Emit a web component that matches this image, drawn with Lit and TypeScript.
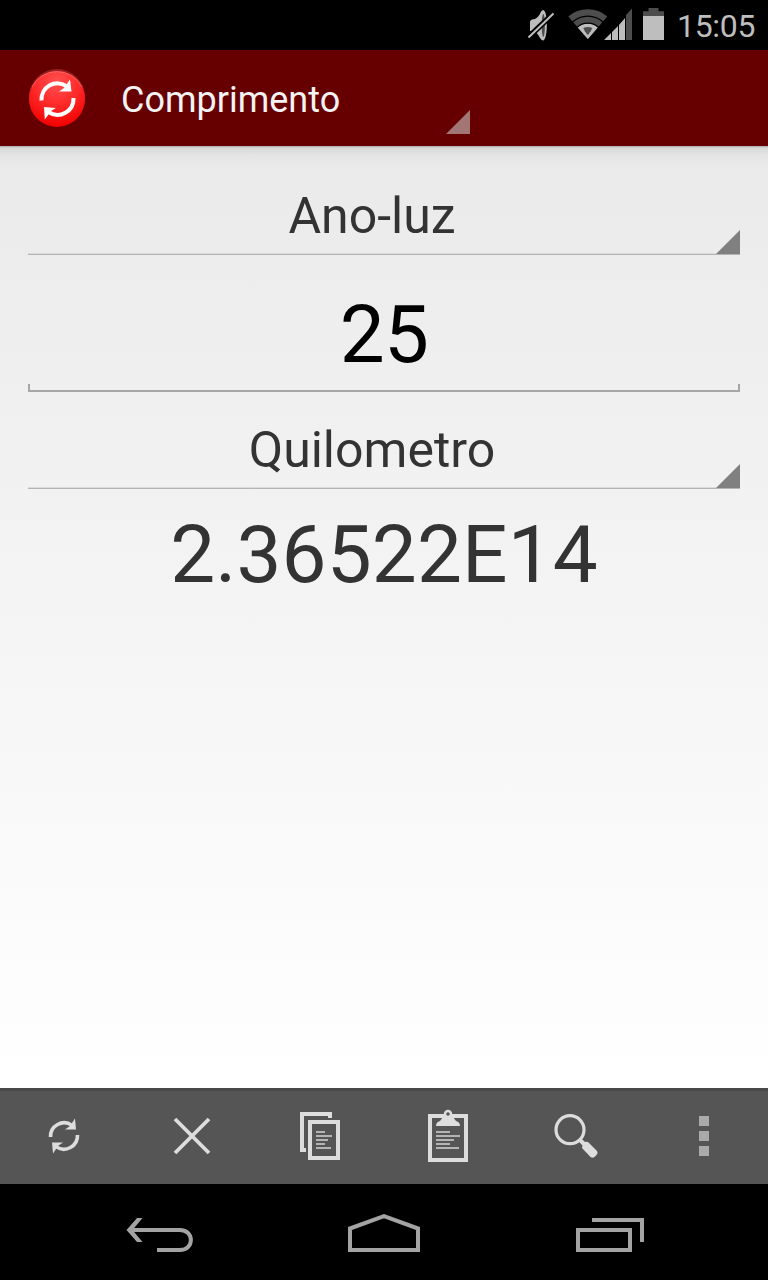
import { LitElement, html, css, svg } from "lit";
import { customElement, property } from "lit/decorators.js";

@customElement("status-bar")
class StatusBar extends LitElement {
  static styles = css`
    :host { display: flex; height: 50px; background: #000; justify-content: flex-end; box-sizing: border-box; padding-right: 13px; }
    svg { display: block; width: 144px; height: 50px; margin-right: 9px; flex: none; }
    .clock { font: 32px/52px Roboto, sans-serif; color: #bebebe; width: 78px; white-space: nowrap; letter-spacing: -0.3px; }
  `;
  render() {
    return html`
      <svg viewBox="524 0 144 50">
        <path fill="#bebebe" d="M530 22Q530 20 532 19.500L535 19Q539 17 541 11.500Q542 10 543.500 10C548 12 548 38 543.500 40.500Q541.500 40.500 540 38Q537.500 33 535 32L530 31Z"/>
        <ellipse cx="543.300" cy="25.500" rx="1.600" ry="11.500" fill="#000" opacity=".6"/>
        <path stroke="#000" stroke-width="5.500" d="M527 38.500L555 12"/>
        <path stroke="#bebebe" stroke-width="2" d="M528.500 37.500L553.500 13.500"/>
        <path fill="#4d4d4d" d="M587.800 39L568.300 16.500A29.700 29.700 0 0 1 607.300 16.500Z"/>
        <path fill="#bebebe" d="M587.800 39L577.500 27.300A15.500 15.500 0 0 1 598.100 27.300Z"/>
        <g fill="none" stroke="#000" stroke-width="1.300">
          <path d="M572 22.500A22.700 22.700 0 0 1 603.600 22.500"/>
          <path d="M577 27.500A15.700 15.700 0 0 1 598.600 27.500"/>
        </g>
        <path fill="#4d4d4d" d="M583.300 28Q588 26 592.300 28L590.800 31.300Q590.500 32 589.500 32.500L588.800 34.500H586.800L586 32.500Q585 32 584.800 31.300Z"/>
        <path fill="#bebebe" d="M604 40L611 33V40ZM612 32L618 26V40H612ZM619 25L625 18V40H619Z"/>
        <path fill="#4d4d4d" d="M626 15L632 8.500V40H626Z"/>
        <path fill="#4d4d4d" d="M643 16V11.300H648.500V8H658.500V11.300H664V16Z"/>
        <path fill="#bebebe" d="M643 16H664V40H643Z"/>
      </svg>
      <span class="clock">15:05</span>`;
  }
}

@customElement("app-header")
class AppHeader extends LitElement {
  @property() heading = "";
  static styles = css`
    :host { display: flex; height: 96px; background: #600; }
    .logo { display: block; width: 64px; height: 96px; margin-left: 25px; flex: none; }
    .picker { display: flex; align-items: flex-end; justify-content: space-between; width: 349px; height: 84px; margin-left: 32px; }
    .name { font: 36px/100px Roboto, sans-serif; color: #f3f3f3; height: 84px; }
    .corner { width: 24px; height: 24px; background: #a37676; clip-path: polygon(100% 0, 100% 100%, 0 100%); }
  `;
  render() {
    return html`
      <svg class="logo" viewBox="25 50 64 96">
        <defs>
          <radialGradient id="ball" cx=".5" cy=".2" r=".8">
            <stop offset="0" stop-color="#ff5050"/>
            <stop offset=".5" stop-color="#ff2a2a"/>
            <stop offset="1" stop-color="#f00000"/>
          </radialGradient>
        </defs>
        <circle cx="57" cy="97" r="28" fill="#982020"/>
        <circle cx="57" cy="99" r="28" fill="url(#ball)"/>
        <path d="M32 87A28 28 0 0 1 82 87" fill="none" stroke="#ff8888" stroke-opacity=".5"/>
        <g fill="none" stroke="#fff" stroke-width="4">
          <path d="M41.500 100.500A16 16 0 0 1 67 86.500"/>
          <path d="M73.500 98A16 16 0 0 1 48.500 112"/>
        </g>
        <path fill="#fff" d="M70 79.500L71.500 91.500L59 91.500L64 88ZM44.800 119.500L44 107L56 108L51 111Z"/>
      </svg>
      <div class="picker"><span class="name">${this.heading}</span><span class="corner"></span></div>`;
  }
}

@customElement("unit-spinner")
class UnitSpinner extends LitElement {
  @property() label = "";
  static styles = css`
    :host { display: grid; grid-template-columns: 24px 1fr 24px; align-items: end; height: 85px; box-sizing: border-box; border-bottom: 1px solid #b4b4b4; box-shadow: inset 0 -1px #dcdcdc; }
    .label { grid-column: 1 / 3; grid-row: 1; text-align: center; font: 50px/92px Roboto, sans-serif; color: #333; height: 84px; }
    .corner { grid-column: 3; grid-row: 1; width: 24px; height: 24px; background: #808080; clip-path: polygon(100% 0, 100% 100%, 0 100%); }
  `;
  render() {
    return html`<span class="label">${this.label}</span><span class="corner"></span>`;
  }
}

const strokes = (rows: number[][]) =>
  rows.map(([x, y, w]) => svg`<rect x=${x} y=${y} width=${w} height="2" fill="#b4b4b4"/>`);

@customElement("tool-bar")
class ToolBar extends LitElement {
  static styles = css`
    :host { display: grid; grid-template-columns: repeat(6, 1fr); height: 96px; box-sizing: border-box; background: #555; border-top: 3px solid #494949; align-items: start; justify-items: center; padding-top: 13px; }
    svg { display: block; width: 64px; height: 64px; }
  `;
  render() {
    return html`
      <svg viewBox="32 1104 64 64">
        <path fill="none" stroke="#ddd" stroke-width="3.600" d="M50.500 1137A13.600 13.600 0 0 1 72 1125.400M77.500 1135A13.600 13.600 0 0 1 56 1146.600"/>
        <path fill="#ddd" d="M75 1118.500L76 1129.500H65L70 1126ZM53 1153.500L52 1142.500H63L58 1146Z"/>
      </svg>
      <svg viewBox="160 1104 64 64">
        <path stroke="#ddd" stroke-width="3.800" d="M175 1119L209 1153M209 1119L175 1153"/>
      </svg>
      <svg viewBox="288 1104 64 64">
        <path fill="#ddd" d="M300 1112H332V1118H328V1116H304V1148H306V1152H300Z"/>
        <rect x="310" y="1122" width="28" height="36" fill="none" stroke="#ddd" stroke-width="4"/>
        ${strokes([[316, 1131, 9], [316, 1135, 16], [316, 1139, 12], [316, 1143, 9], [316, 1147, 15]])}
      </svg>
      <svg viewBox="416 1104 64 64">
        <rect x="430" y="1116" width="36" height="44" fill="none" stroke="#ddd" stroke-width="4"/>
        <path fill="#ddd" d="M436 1126Q436 1122 440 1121L443 1117H453L456 1121Q460 1122 460 1126Z"/>
        <circle cx="448" cy="1114" r="3" fill="#555" stroke="#ddd" stroke-width="2.400"/>
        ${strokes([[436, 1131, 14], [436, 1135, 24], [436, 1139, 18], [436, 1143, 14], [436, 1147, 23]])}
      </svg>
      <svg viewBox="544 1104 64 64">
        <circle cx="570" cy="1129.700" r="14" fill="none" stroke="#ddd" stroke-width="3.200"/>
        <path stroke="#ddd" stroke-width="4" d="M579 1139L586 1146"/>
        <path fill="#ddd" d="M583 1143Q585 1141 588 1142L597 1151Q598.500 1153 596.500 1155L594.500 1157Q592.500 1158.500 590.500 1157L582 1148Z"/>
      </svg>
      <svg viewBox="672 1104 64 64">
        <path fill="#aaa" d="M699 1116h10v10h-10zM699 1131h10v10h-10zM699 1146h10v10h-10z"/>
      </svg>`;
  }
}

@customElement("nav-bar")
class NavBar extends LitElement {
  static styles = css`
    :host { display: grid; grid-template-columns: 80px 80px 80px; column-gap: 144px; height: 96px; background: #000; box-sizing: border-box; padding-left: 120px; }
    svg { display: block; width: 80px; height: 96px; fill: none; stroke: #a3a3a3; stroke-width: 4; }
    .solid { fill: #a3a3a3; stroke: none; }
  `;
  render() {
    return html`
      <svg viewBox="120 1184 80 96">
        <path d="M130 1230H180C194.500 1230 194.500 1250 180 1250H157"/>
        <path class="solid" d="M137 1218H142.500L132.500 1230L142.500 1242H137L126.500 1230Z"/>
      </svg>
      <svg viewBox="344 1184 80 96"><path d="M350 1228.500L384 1216.200L418 1228.500V1250H350Z"/></svg>
      <svg viewBox="568 1184 80 96"><path d="M578 1230H630V1250H578ZM592 1220H642V1242"/></svg>`;
  }
}

@customElement("app-root")
class AppRoot extends LitElement {
  static styles = css`
    :host { display: flex; flex-direction: column; height: 1280px; overflow: hidden; font-family: Roboto, sans-serif; }
    main { flex: 1; display: flex; flex-direction: column; box-sizing: border-box; padding: 24px 28px 0; background: linear-gradient(rgba(0,0,0,.28), rgba(0,0,0,.07) 2px, rgba(0,0,0,.03) 8px, transparent 20px) top / 100% 20px no-repeat, linear-gradient(#eaeaea, #fff); }
    .amount { height: 137px; box-sizing: border-box; text-align: center; font-size: 80px; line-height: 160px; letter-spacing: -0.6px; color: #000;
      background: linear-gradient(#a6a6a6, #a6a6a6) left bottom / 100% 2px no-repeat, linear-gradient(#a6a6a6, #a6a6a6) left bottom / 2px 8px no-repeat, linear-gradient(#a6a6a6, #a6a6a6) right bottom / 2px 8px no-repeat; }
    .second { margin-top: 12px; }
    .result { text-align: center; font-size: 80px; line-height: 94px; padding-top: 19px; letter-spacing: 0.15px; color: #333; }
  `;
  render() {
    return html`
      <status-bar></status-bar>
      <app-header heading="Comprimento"></app-header>
      <main>
        <unit-spinner label="Ano-luz"></unit-spinner>
        <div class="amount">25</div>
        <unit-spinner class="second" label="Quilometro"></unit-spinner>
        <div class="result">2.36522E14</div>
      </main>
      <tool-bar></tool-bar>
      <nav-bar></nav-bar>`;
  }
}
